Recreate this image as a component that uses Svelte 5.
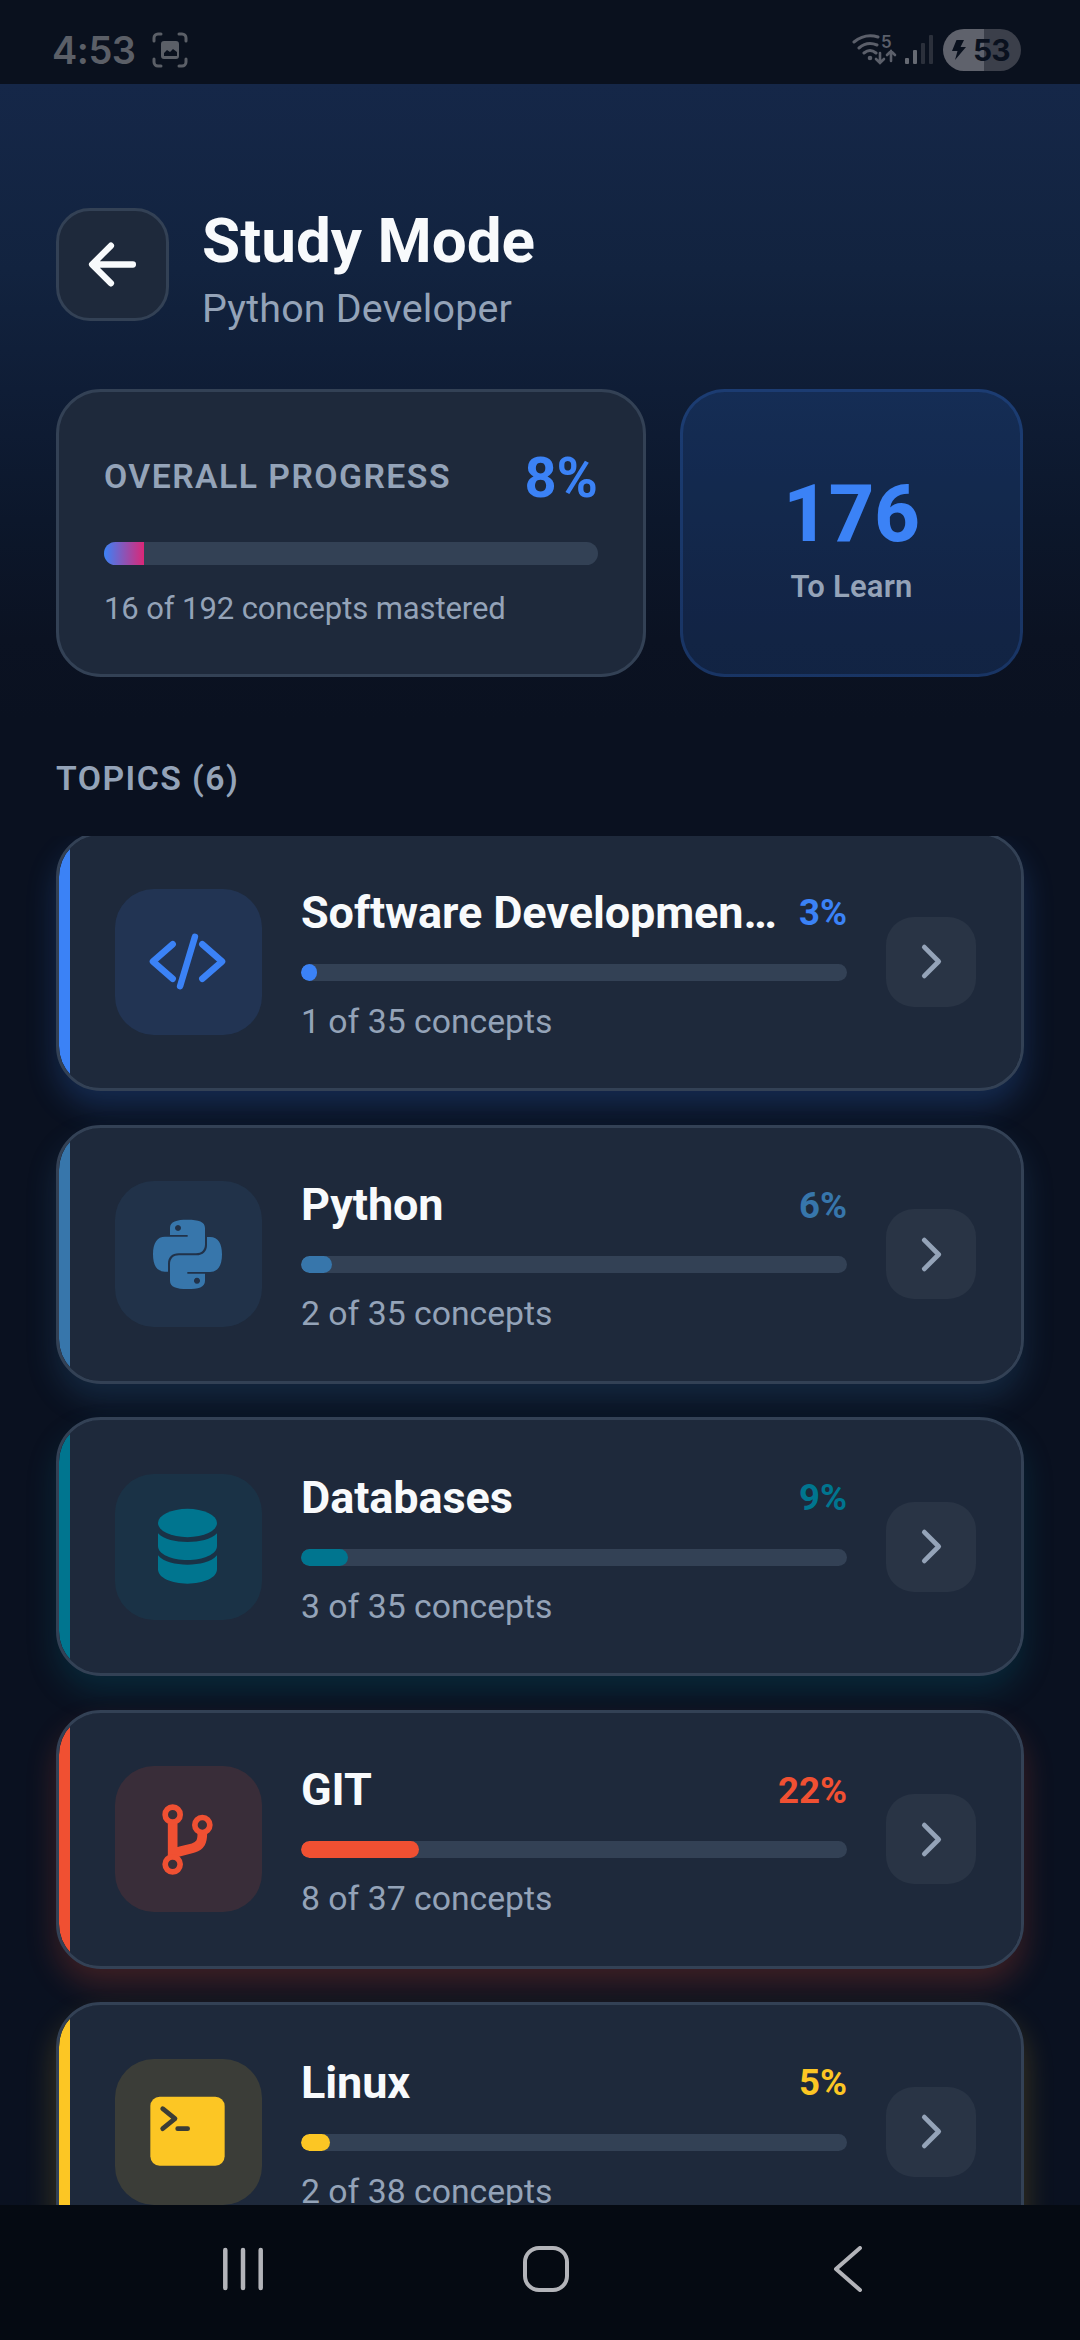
<script>
  const topics = [
    { name: 'Software Developmen…', icon: 'code', done: 1, total: 35, color: '#3b82f6' },
    { name: 'Python', icon: 'python', done: 2, total: 35, color: '#3776ab' },
    { name: 'Databases', icon: 'database', done: 3, total: 35, color: '#00758f' },
    { name: 'GIT', icon: 'branch', done: 8, total: 37, color: '#f05032' },
    { name: 'Linux', icon: 'terminal', done: 2, total: 38, color: '#fcc624' }
  ];
  const ratio = (t) => (t.done / t.total) * 100;
</script>

<div class="screen">
  <div class="status">
    <span class="clock">4:53</span>
    <svg class="shot" viewBox="0 0 36 36" width="36" height="36">
      <g fill="none" stroke="#5b5f67" stroke-width="3" stroke-linecap="round">
        <path d="M2 9V6a4 4 0 0 1 4-4h3M27 2h3a4 4 0 0 1 4 4v3M34 27v3a4 4 0 0 1-4 4h-3M9 34H6a4 4 0 0 1-4-4v-3" />
      </g>
      <path fill="#5b5f67" fill-rule="evenodd" d="M12 9h12a3 3 0 0 1 3 3v12a3 3 0 0 1-3 3H12a3 3 0 0 1-3-3V12a3 3 0 0 1 3-3ZM12 24h13v-4l-4-3-3 3-3-2-3 3Z" />
    </svg>
    <span class="grow"></span>
    <div class="wifi">
      <svg viewBox="0 0 46 34" width="46" height="34">
        <g fill="none" stroke="#5b5f6a" stroke-width="3" stroke-linecap="round">
          <path d="M2 9Q13 0 26 4M7 15Q15 8 25 12M12 20Q18 15 24 20" />
          <path stroke-width="2.6" d="M28 20v9M24 26l4 4 4-4M39 28V18M35 22l4-4 4 4" />
        </g>
        <circle cx="18" cy="25" r="2.3" fill="#5b5f6a" />
      </svg>
      <span>5</span>
    </div>
    <svg class="signal" viewBox="0 0 28 30" width="28" height="30">
      <rect x="0" y="23" width="4" height="6" rx="1" fill="#666a73" />
      <rect x="8" y="15" width="4" height="14" rx="1" fill="#666a73" />
      <rect x="16" y="8" width="4" height="21" rx="1" fill="#2b303b" />
      <rect x="24" y="0" width="4" height="29" rx="1" fill="#2b303b" />
    </svg>
    <div class="battery">
      <svg viewBox="0 0 14 20" width="14" height="20"><path fill="#0a111e" d="M4.500 0H12L8.500 7H14L3 20 5.500 11H0Z" /></svg>
      <span>53</span>
    </div>
  </div>

  <header>
    <button class="back" aria-label="Back">
      <svg viewBox="0 0 512 512" width="67" height="67" fill="none" stroke="#f8fafc" stroke-width="48" stroke-linecap="round" stroke-linejoin="round">
        <path d="M244 400 100 256 244 112M120 256H412" />
      </svg>
    </button>
    <div>
      <h1>Study Mode</h1>
      <p>Python Developer</p>
    </div>
  </header>

  <section class="stats">
    <div class="overall">
      <div class="row">
        <span class="label">OVERALL PROGRESS</span>
        <span class="value">8%</span>
      </div>
      <div class="meter"><div class="fill"></div></div>
      <p>16 of 192 concepts mastered</p>
    </div>
    <div class="remaining">
      <strong>176</strong>
      <span>To Learn</span>
    </div>
  </section>

  <h2>TOPICS (6)</h2>

  <main>
    {#each topics as t}
      <article style="--c: {t.color}">
        <div class="tile">
          {#if t.icon === 'code'}
            <svg viewBox="0 0 512 512" width="79" height="79" fill="none" stroke="currentColor" stroke-width="42" stroke-linecap="round" stroke-linejoin="round">
              <path d="M160 368 32 256 160 144M352 368 480 256 352 144M304 96 208 416" />
            </svg>
          {:else if t.icon === 'python'}
            <svg viewBox="0 0 237 237" width="79" height="79" fill="currentColor">
              <defs>
                <path id="snake" fill-rule="evenodd" d="M66 60V39C66 19 86 14 118.500 14C152 14 171 20 171 39V88C171 105 161 115 144 115H92C72 115 60 127 60 146V170H51C26 170 15 150 15 118C15 83 28 65 51 65H119V60ZM90 30a9 9 0 1 0 .1 0Z" />
              </defs>
              <use href="#snake" />
              <use href="#snake" transform="rotate(180 118.500 118)" />
            </svg>
          {:else if t.icon === 'database'}
            <svg viewBox="0 0 237 237" width="79" height="79" fill="currentColor">
              <ellipse cx="118.500" cy="48" rx="88.500" ry="42.500" />
              <path d="M30 79C48 98 82 105 118.500 105S189 98 207 79V117C207 142 166 159 118.500 159S30 142 30 117Z" />
              <path d="M30 145C48 166 82 173 118.500 173S189 166 207 145V187C207 213 166 230 118.500 230S30 213 30 187Z" />
            </svg>
          {:else if t.icon === 'branch'}
            <svg viewBox="0 0 237 237" width="79" height="79" fill="none" stroke="currentColor">
              <path stroke-width="29" d="M74 72V178M163 100C163 126 157 137 136 144C112 152 88 151 74 166" />
              <g stroke-width="17">
                <circle class="node" cx="74" cy="44" r="22.500" />
                <circle class="node" cx="163" cy="75" r="22.500" />
                <circle class="node" cx="74" cy="193" r="22.500" />
              </g>
            </svg>
          {:else}
            <svg viewBox="0 0 237 237" width="79" height="79" fill="none">
              <rect x="7" y="14" width="223" height="207" rx="28" fill="currentColor" />
              <path d="M44 50 81 80 44 110M89 110H119" stroke="#3b3d36" stroke-width="14" stroke-linecap="round" stroke-linejoin="round" />
            </svg>
          {/if}
        </div>
        <div class="body">
          <div class="row">
            <h3>{t.name}</h3>
            <span class="pct">{Math.round(ratio(t))}%</span>
          </div>
          <div class="bar"><div class="done" style="width: {ratio(t)}%"></div></div>
          <p>{t.done} of {t.total} concepts</p>
        </div>
        <div class="go">
          <svg viewBox="0 0 512 512" width="51" height="51" fill="none" stroke="#94a3b8" stroke-width="48" stroke-linecap="round" stroke-linejoin="round">
            <path d="M184 112 328 256 184 400" />
          </svg>
        </div>
      </article>
    {/each}
  </main>

  <nav>
    <svg viewBox="0 0 40 44" width="40" height="44" stroke="#b3b4b9" stroke-width="4.500" stroke-linecap="round">
      <path d="M2.300 3V41M20 3V41M37.700 3V41" />
    </svg>
    <svg class="home" viewBox="0 0 46 46" width="46" height="46" fill="none" stroke="#b3b4b9" stroke-width="4">
      <rect x="2" y="2" width="42" height="42" rx="14" />
    </svg>
    <svg viewBox="0 0 30 46" width="30" height="46" fill="none" stroke="#b3b4b9" stroke-width="4" stroke-linecap="round" stroke-linejoin="round">
      <path d="M27 2 3 23 27 44" />
    </svg>
  </nav>
</div>

<style>
  :global(body) { margin: 0; background: #0a1120; }
  * { box-sizing: border-box; margin: 0; padding: 0; }
  svg { display: block; flex: none; }

  .screen {
    width: 1080px;
    height: 2340px;
    overflow: hidden;
    display: flex;
    flex-direction: column;
    font-family: Roboto, "Liberation Sans", sans-serif;
    background: linear-gradient(180deg, #152849 0, #152748 84px, #12233f 270px, #0f1d36 390px, #0c172b 520px, #0b1222 640px, #0a1120 720px);
  }

  .status {
    flex: none;
    height: 84px;
    display: flex;
    align-items: center;
    padding: 16px 59px 0 52px;
    background: #0a111e;
  }
  .clock {
    width: 100px;
    font: 600 38px/40px Inter, Roboto, sans-serif;
    color: #5b5f67;
    letter-spacing: -0.5px;
  }
  .grow { flex: 1; }
  .wifi {
    position: relative;
    margin-right: 7px;
  }
  .wifi span {
    position: absolute;
    left: 29px;
    top: -1px;
    font: 600 17px/21px Inter, Roboto, sans-serif;
    color: #5b5f6a;
  }
  .signal { margin-right: 10px; }
  .battery {
    width: 78px;
    height: 42px;
    border-radius: 21px;
    display: flex;
    align-items: center;
    gap: 7px;
    padding-left: 9px;
    background: linear-gradient(90deg, #5f626c 53%, #3b3f4a 53%);
    font: 700 30px/42px Inter, Roboto, sans-serif;
    letter-spacing: -1px;
    color: #0a111e;
  }

  header {
    flex: none;
    height: 305px;
    display: flex;
    align-items: flex-start;
    gap: 33px;
    padding: 120px 56px 0;
  }
  .back {
    width: 113px;
    height: 113px;
    margin-top: 4px;
    display: grid;
    place-items: center;
    border: 3px solid #334155;
    border-radius: 34px;
    background: #1e293b;
  }
  h1 {
    margin-top: 1px;
    font-size: 62px;
    line-height: 72px;
    font-weight: 700;
    color: #f8fafc;
  }
  header p {
    margin-top: 9px;
    font-size: 39.4px;
    line-height: 46px;
    letter-spacing: 0.2px;
    color: #94a3b8;
  }

  .stats {
    flex: none;
    height: 288px;
    display: grid;
    grid-template-columns: 1fr 343px;
    gap: 34px;
    padding: 0 57px 0 56px;
  }
  .overall {
    border: 3px solid #334155;
    border-radius: 45px;
    background: #1e293b;
    padding: 52px 45px 0;
  }
  .row {
    display: flex;
    align-items: center;
    justify-content: space-between;
  }
  .overall .row { height: 67px; }
  .label {
    padding-bottom: 3px;
    font-size: 33.75px;
    font-weight: 600;
    letter-spacing: 1.45px;
    color: #94a3b8;
  }
  .value {
    font-size: 56px;
    font-weight: 700;
    color: #3b82f6;
  }
  .meter {
    height: 23px;
    margin-top: 31px;
    border-radius: 12px;
    overflow: hidden;
    background: #334155;
  }
  .fill {
    width: 8.1%;
    height: 100%;
    background: linear-gradient(90deg, #3b82f6, #db2777);
  }
  .overall p {
    margin-top: 26px;
    font-size: 31px;
    line-height: 36px;
    letter-spacing: -0.1px;
    color: #94a3b8;
  }
  .remaining {
    display: flex;
    flex-direction: column;
    align-items: center;
    padding-top: 74px;
    border: 3px solid rgba(59, 130, 246, 0.19);
    border-radius: 45px;
    background: rgba(59, 130, 246, 0.16);
  }
  .remaining strong {
    font-size: 79px;
    line-height: 96px;
    font-weight: 800;
    color: #3b82f6;
  }
  .remaining span {
    margin-top: 7px;
    font-size: 31px;
    line-height: 36px;
    font-weight: 600;
    letter-spacing: 0.2px;
    color: #94a3b8;
  }

  h2 {
    flex: none;
    height: 159px;
    padding: 82px 56px 0;
    font-size: 33.75px;
    line-height: 40px;
    font-weight: 600;
    letter-spacing: 1.45px;
    color: #94a3b8;
  }

  main {
    flex: 1;
    min-height: 0;
    overflow: hidden;
    display: flex;
    flex-direction: column;
    gap: 33.75px;
    padding: 0 56px;
  }
  article {
    flex: none;
    height: 258.75px;
    display: flex;
    align-items: center;
    padding: 0 45px 0 45px;
    border: 3px solid #334155;
    border-radius: 45px;
    background: linear-gradient(90deg, var(--c) 11px, #1e293b 11px) padding-box;
    background-color: #1e293b;
    box-shadow: 0 16px 30px color-mix(in srgb, var(--c) 22%, transparent);
  }
  article:first-child { margin-top: -3.75px; }
  .tile {
    flex: none;
    width: 147px;
    height: 146px;
    margin-left: 11px;
    padding-right: 2px;
    display: grid;
    place-items: center;
    border-radius: 39px;
    color: var(--c);
    background: color-mix(in srgb, var(--c) 13%, transparent);
  }
  .body {
    flex: 1;
    min-width: 0;
    margin: 0 39px;
    padding-top: 4px;
  }
  .body .row { height: 50px; }
  h3 {
    white-space: nowrap;
    font-size: 45px;
    line-height: 54px;
    font-weight: 700;
    letter-spacing: -0.1px;
    color: #f8fafc;
  }
  .pct {
    flex: none;
    font-size: 36.6px;
    font-weight: 700;
    color: var(--c);
  }
  .bar {
    height: 17px;
    margin-top: 26px;
    border-radius: 9px;
    overflow: hidden;
    background: #334155;
  }
  .done {
    height: 100%;
    border-radius: 9px;
    background: var(--c);
  }
  .body p {
    margin-top: 23px;
    font-size: 33.75px;
    line-height: 36px;
    color: #94a3b8;
  }
  .go {
    flex: none;
    width: 90px;
    height: 90px;
    display: grid;
    place-items: center;
    border-radius: 28px;
    background: #293445;
  }
  .node { fill: #393039; }

  nav {
    flex: none;
    height: 135px;
    display: flex;
    align-items: center;
    justify-content: space-between;
    padding: 0 217px 7px 223px;
    background: #050a12;
  }
  .home { margin-right: 4px; }
</style>
